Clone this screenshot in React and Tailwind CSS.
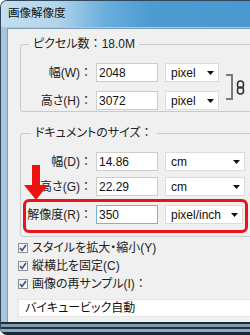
const FONT = "font-['Liberation_Sans','Noto_Sans_CJK_JP',sans-serif] [font-feature-settings:'palt']";

function Colon() {
  return <span className="[font-feature-settings:normal]">：</span>;
}

function Arrow() {
  return (
    <svg width="7" height="4" viewBox="0 0 7 4" className="shrink-0">
      <polygon points="0,0 7,0 3.5,4" fill="#111" />
    </svg>
  );
}

function Select({ value, w }) {
  return (
    <div className={`${w} h-[19px] bg-white border border-[#dcdcdc] flex items-center justify-between pl-[5px] pr-[4px] text-[12px] text-[#111]`}>
      <span>{value}</span>
      <Arrow />
    </div>
  );
}

function Input({ value, focus }) {
  return (
    <div className={`w-[62px] h-[19px] bg-white border ${focus ? "border-[#7eb0dc]" : "border-[#cdcdcd]"} flex items-center pl-[2px] text-[12px] text-[#111]`}>
      {value}
    </div>
  );
}

function Row({ label, value, unit, selW, labelW = "w-[71px]", focus }) {
  return (
    <div className="flex items-center h-[19px]">
      <div className={`${labelW} text-right text-[12px] text-[#222] whitespace-nowrap`}>
        {label}
        <Colon />
      </div>
      <div className="w-[4px]" />
      <Input value={value} focus={focus} />
      <div className="w-[7px]" />
      <Select value={unit} w={selW} />
    </div>
  );
}

function Check({ label, colon }) {
  return (
    <div className="flex items-center h-[18px]">
      <div className="w-[10px] h-[10px] border border-[#8e8f8f] bg-[linear-gradient(135deg,#ececec,#ffffff)] flex items-center justify-center">
        <svg width="8" height="8" viewBox="0 0 8 8">
          <polyline points="1,4 3,6.5 7,1" fill="none" stroke="#3b4f8e" strokeWidth="1.6" />
        </svg>
      </div>
      <span className="ml-[4px] text-[12px] text-[#222] whitespace-nowrap">
        {label}
        {colon && <Colon />}
      </span>
    </div>
  );
}

export default function App() {
  return (
    <div className={`relative w-[250px] h-[335px] overflow-hidden bg-[#a8c4da] border-l border-t border-[#33475a] rounded-tl-[7px] rounded-bl-[7px] flex flex-col ${FONT}`}>
      {/* title bar */}
      <div className="h-[27px] shrink-0 flex items-center pl-[7px] border-b border-[#a3cbe6] bg-[linear-gradient(90deg,#c3def0_0%,#b3d5ec_22%,#6aaddb_42%,#4d9bd1_60%,#4a98cf_100%)]">
        <span className="text-[11.5px] text-[#111] leading-none">画像解像度</span>
      </div>

      {/* middle */}
      <div className="flex-1 flex min-h-0">
        <div className="w-[6px] shrink-0 bg-[#a9c5da]" />
        <div className="flex-1 bg-[#f0f0f0] border-l border-t border-[#7f9db5] pl-[10px] flex flex-col">
          {/* group 1 */}
          <fieldset className="mt-[7px] ml-[2px] w-[240px] border border-[#c6cbcf] rounded-[3px] pt-[11px] pb-[1px] px-0">
            <legend className="ml-[8px] px-[4px] leading-[16px] text-[12px] text-[#222]">
              ピクセル数<Colon />18.0M
            </legend>
            <div className="flex items-center">
              <div className="flex flex-col gap-[9px]">
                <Row label="幅(W)" value="2048" unit="pixel" selW="w-[54px]" />
                <Row label="高さ(H)" value="3072" unit="pixel" selW="w-[54px]" />
              </div>
              <div className="ml-[7px] w-[7px] h-[26px] border-t-2 border-r-2 border-b-2 border-[#7a7a7a]" />
              <svg width="9" height="15" viewBox="0 0 9 15" className="ml-[3px] mt-[2px]">
                <rect x="1.5" y="1" width="6" height="7" rx="3" fill="none" stroke="#333" strokeWidth="1.6" />
                <rect x="1.5" y="7" width="6" height="7" rx="3" fill="none" stroke="#333" strokeWidth="1.6" />
              </svg>
            </div>
          </fieldset>

          {/* group 2 */}
          <fieldset className="mt-[13px] ml-[2px] w-[240px] border border-[#c6cbcf] rounded-[3px] pt-[11px] pb-[3px] px-0">
            <legend className="ml-[10px] px-[4px] leading-[16px] text-[12px] text-[#222]">
              ドキュメントのサイズ<Colon />
            </legend>
            <div className="flex flex-col">
              <Row label="幅(D)" value="14.86" unit="cm" selW="w-[80px]" />
              <div className="h-[6px]" />
              <Row label="高さ(G)" value="22.29" unit="cm" selW="w-[80px]" />
              <div className="ml-[2px] mt-[3px] w-[225px] border-[3px] border-[#e8141c] rounded-[6px] pt-[3px] pb-[6px]">
                <Row label="解像度(R)" value="350" unit="pixel/inch" selW="w-[78px]" labelW="w-[66px]" focus />
              </div>
            </div>
          </fieldset>

          {/* checkboxes */}
          <div className="mt-[2px] flex flex-col">
            <Check label="スタイルを拡大・縮小(Y)" />
            <Check label="縦横比を固定(C)" />
            <Check label="画像の再サンプル(I)" colon />
          </div>

          <div className="mt-[6px] h-[18px] w-[240px] bg-white border border-[#e6e6e6] flex items-center pl-[6px] text-[12px] text-[#111] whitespace-nowrap">
            バイキュービック自動
          </div>
        </div>
      </div>

      {/* bottom frame */}
      <div className="h-[13px] shrink-0 bg-[linear-gradient(#1d2a34_0px,#1d2a34_2px,#7e9bb2_2px,#7e9bb2_5px,#22313d_5px,#22313d_7px,#8eaabf_7px,#8eaabf_10px,#1c2833_10px)]" />

      {/* red arrow overlay */}
      <svg className="absolute left-[22px] top-[164px]" width="26" height="36" viewBox="0 0 26 36">
        <polygon points="9,0 17,0 17,20 25,20 13,35 1,20 9,20" fill="#ee1111" />
      </svg>
    </div>
  );
}
